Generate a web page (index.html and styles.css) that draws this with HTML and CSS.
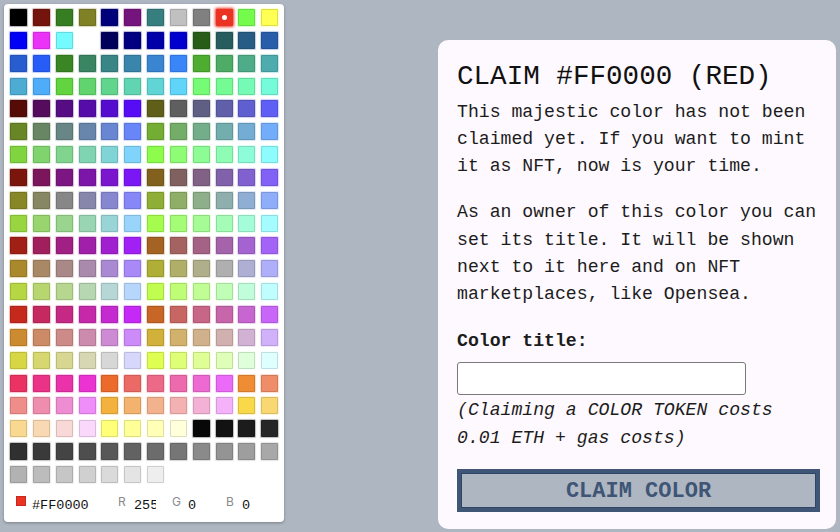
FILE: index.html
```html
<!DOCTYPE html>
<html lang="en">
<head>
<meta charset="utf-8">
<title>Claim color</title>
<link rel="stylesheet" href="styles.css">
</head>
<body>
<div class="picker">
  <div class="grid" id="grid"></div>
  <div class="info">
    <span class="chip"></span>
    <span class="hex">#FF0000</span>
    <label class="chan"><span class="chan-label">R</span><input class="chan-input" value="255"></label>
    <label class="chan"><span class="chan-label">G</span><input class="chan-input" value="0"></label>
    <label class="chan"><span class="chan-label">B</span><input class="chan-input" value="0"></label>
  </div>
</div>
<main class="card">
  <h1 class="title">CLAIM #FF0000 (RED)</h1>
  <p class="text">This majestic color has not been claimed yet. If you want to mint it as NFT, now is your time.</p>
  <p class="text">As an owner of this color you can set its title. It will be shown next to it here and on NFT marketplaces, like Opensea.</p>
  <label class="field-label" for="title">Color title:</label>
  <input class="field" id="title" type="text">
  <p class="note">(Claiming a COLOR TOKEN costs 0.01 ETH + gas costs)</p>
  <button class="claim" type="button">CLAIM COLOR</button>
</main>
<script src="script.js"></script>
</body>
</html>
```

FILE: styles.css
```css
html, body {
  margin: 0;
}
body {
  background: #aeb6c1;
  display: flex;
  align-items: flex-start;
  padding: 4px;
  height: 532px;
  box-sizing: border-box;
  overflow: hidden;
  font-family: "Liberation Mono", "DejaVu Sans Mono", monospace;
}
.picker {
  width: 280px;
  height: 518px;
  box-sizing: border-box;
  background: #ffffff;
  border-radius: 4px;
  box-shadow: 0 1px 3px rgba(0, 0, 0, 0.3);
  padding: 5px 6px;
  flex: none;
}
.grid {
  display: grid;
  grid-template-columns: repeat(12, 17px);
  grid-auto-rows: 17px;
  gap: 5.85px;
}
.sw {
  position: relative;
  border-radius: 1px;
  box-shadow: inset 0 0 0 1px rgba(0, 0, 0, 0.13), 0 0 1px 0.5px color-mix(in srgb, var(--c) 30%, transparent);
}
.sw.blank {
  box-shadow: none;
}
.sw.selected {
  box-shadow: 0 0 3px 1px var(--c);
}
.sw.selected::after {
  content: "";
  position: absolute;
  left: 50%;
  top: 50%;
  width: 5px;
  height: 5px;
  margin: -2.5px 0 0 -2.5px;
  background: #ffffff;
  border-radius: 50%;
}
.info {
  display: flex;
  align-items: flex-end;
  height: 18px;
  margin-top: 13px;
  padding-left: 6px;
  color: #111;
}
.chip {
  align-self: flex-start;
  width: 10px;
  height: 10px;
  background: #ea3323;
  box-shadow: inset 0 0 0 1px #c42a1f;
  margin-right: 6px;
  flex: none;
}
.hex {
  font-size: 13.5px;
  line-height: 16px;
  width: 86px;
  flex: none;
}
.chan {
  display: flex;
  align-items: flex-end;
  height: 100%;
  margin-right: 16px;
}
.chan-label {
  align-self: flex-start;
  width: 16px;
  font-family: Inter, "Liberation Sans", sans-serif;
  font-size: 12px;
  line-height: 12px;
  color: #8a8a8a;
}
.chan-input {
  width: 22px;
  height: 16px;
  border: 0;
  padding: 0;
  margin: 0;
  background: transparent;
  font-family: "Liberation Mono", "DejaVu Sans Mono", monospace;
  font-size: 13.5px;
  line-height: 16px;
  color: #111;
  outline: none;
}
.card {
  margin-left: 154px;
  margin-top: 36px;
  width: 398px;
  height: 489px;
  box-sizing: border-box;
  flex: none;
  background: #fdf9fe;
  border-radius: 10px;
  padding: 20px 16px 17px 19px;
  color: #1c1c1c;
}
.title {
  margin: 0 0 5.6px;
  font-size: 27.6px;
  line-height: 33px;
  font-weight: 400;
  color: #111;
}
.text {
  margin: 0 0 19px;
  font-size: 18.15px;
  line-height: 27.3px;
}
.field-label {
  display: block;
  font-weight: 700;
  font-size: 18.15px;
  line-height: 27.3px;
}
.field {
  display: block;
  margin: 7px 0 0;
  width: 289px;
  height: 33px;
  box-sizing: border-box;
  border: 1px solid #7a7a7a;
  border-radius: 3px;
  background: #ffffff;
  padding: 0 6px;
  font-family: inherit;
  font-size: 16px;
}
.note {
  margin: 2.5px 0 0;
  font-style: italic;
  font-size: 18.15px;
  line-height: 27.3px;
}
.claim {
  display: block;
  margin-top: 17px;
  width: 100%;
  height: 43px;
  box-sizing: border-box;
  border: 4px solid #3f5677;
  box-shadow: inset 0 0 0 1px #2f4565;
  background: #aeb6c1;
  color: #3e5576;
  font-family: "Liberation Mono", "DejaVu Sans Mono", monospace;
  font-weight: 700;
  font-size: 22px;
  line-height: 1;
  padding: 3px 0 0;
}
```

FILE: script.js
```js
(function () {
  var system = ['#000000', '#800000', '#008000', '#808000', '#000080', '#800080', '#008080', '#c0c0c0',
    '#808080', '#ff0000', '#00ff00', '#ffff00', '#0000ff', '#ff00ff', '#00ffff', '#ffffff'];
  var levels = [0, 95, 135, 175, 215, 255];
  function hex2(n) { var s = n.toString(16); return s.length < 2 ? '0' + s : s; }
  var list = system.slice();
  for (var r = 0; r < 6; r++) {
    for (var g = 0; g < 6; g++) {
      for (var b = 0; b < 6; b++) {
        list.push('#' + hex2(levels[r]) + hex2(levels[g]) + hex2(levels[b]));
      }
    }
  }
  for (var i = 0; i < 24; i++) {
    var v = 8 + 10 * i;
    list.push('#' + hex2(v) + hex2(v) + hex2(v));
  }
  var seen = {};
  var colors = [];
  list.forEach(function (c) { if (!seen[c]) { seen[c] = 1; colors.push(c); } });

  function lin(c) { c /= 255; return c <= 0.04045 ? c / 12.92 : Math.pow((c + 0.055) / 1.055, 2.4); }
  function enc(c) { c = Math.max(0, Math.min(1, c)); return c <= 0.0031308 ? 12.92 * c : 1.055 * Math.pow(c, 1 / 2.4) - 0.055; }
  function shown(hex) {
    var r = lin(parseInt(hex.substr(1, 2), 16));
    var g = lin(parseInt(hex.substr(3, 2), 16));
    var b = lin(parseInt(hex.substr(5, 2), 16));
    var R = 0.8224621 * r + 0.177538 * g;
    var G = 0.0331941 * r + 0.9668058 * g;
    var B = 0.0170827 * r + 0.0723974 * g + 0.9105199 * b;
    return 'rgb(' + Math.round(enc(R) * 255) + ',' + Math.round(enc(G) * 255) + ',' + Math.round(enc(B) * 255) + ')';
  }

  var grid = document.getElementById('grid');
  colors.forEach(function (c) {
    var d = document.createElement('div');
    d.className = 'sw' + (c === '#ff0000' ? ' selected' : '') + (c === '#ffffff' ? ' blank' : '');
    d.title = c;
    var s = shown(c);
    d.style.background = s;
    d.style.setProperty('--c', s);
    grid.appendChild(d);
  });
})();
```
